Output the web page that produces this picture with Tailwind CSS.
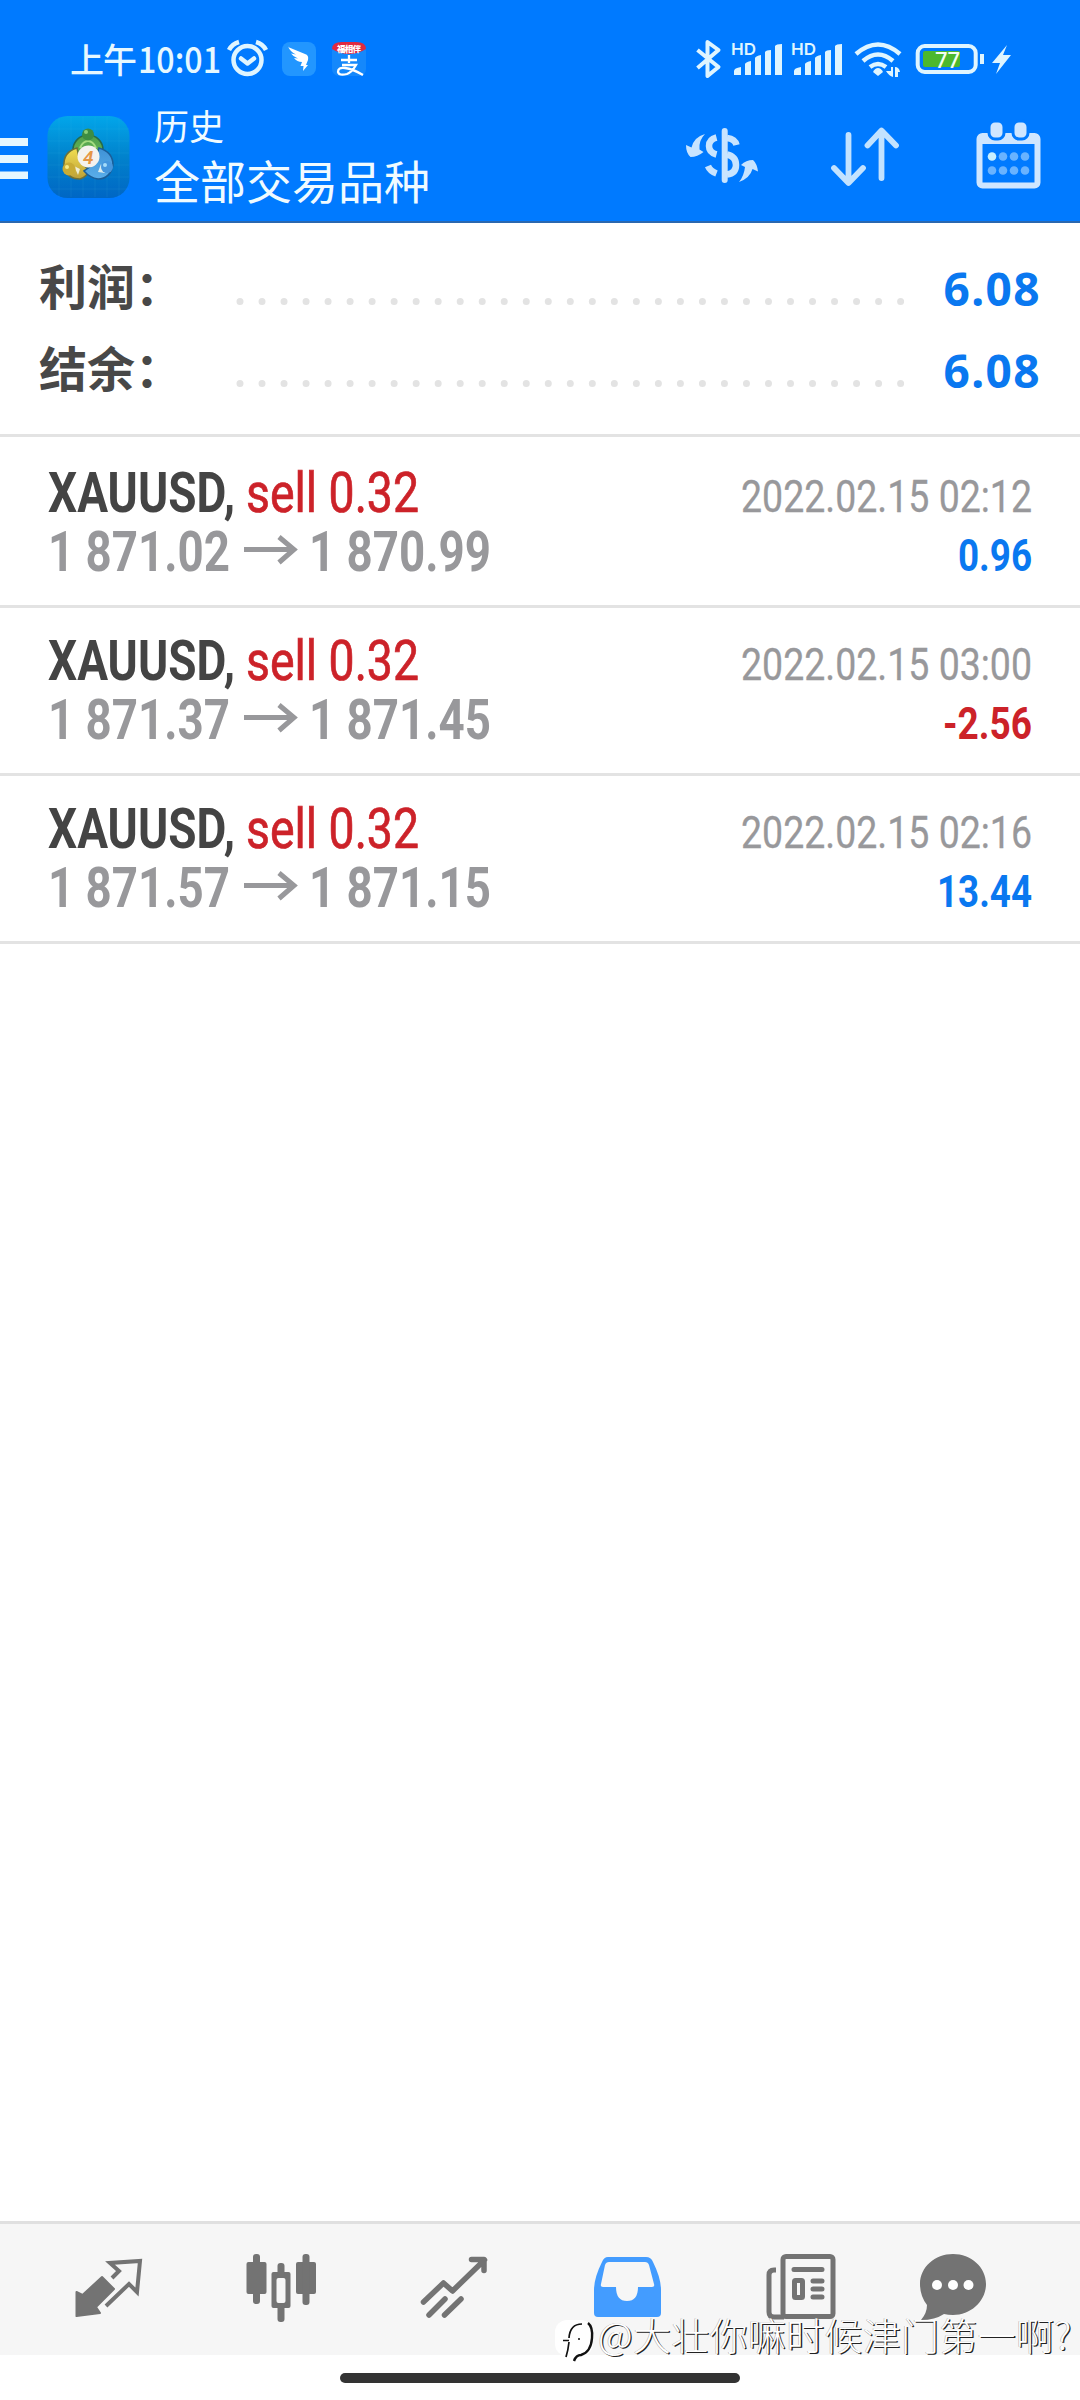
<!DOCTYPE html>
<html lang="zh-CN">
<head>
<meta charset="utf-8">
<title>历史</title>
<script src="https://cdn.jsdelivr.net/npm/@tailwindcss/browser@4"></script>
</head>
<body class="w-[1080px] h-[2400px] overflow-hidden bg-white font-['Roboto','Noto_Sans_CJK_SC',sans-serif] flex flex-col">

<header class="h-[223px] shrink-0 bg-[#007aff] border-b-2 border-[#2a68b0] flex flex-col text-[#f0fbff]">
  <!-- status bar -->
  <div class="h-[96px] shrink-0 flex justify-between">
    <svg class="w-[420px] h-[96px] block" viewBox="0 0 420 96" fill="none">
      <text x="70" y="72.500" font-size="34" font-weight="500" fill="#e6f8ff" textLength="67" font-family="Noto Sans CJK SC">上午</text>
      <text x="138" y="72.500" font-size="35" font-weight="500" fill="#e6f8ff" textLength="83" lengthAdjust="spacingAndGlyphs" font-family="Noto Sans CJK SC">10:01</text>
      <g stroke="#dff5ff" stroke-width="4.500" stroke-linecap="round" stroke-linejoin="round">
        <circle cx="247.500" cy="60" r="14"/><path d="M241 58.500l6.500 5 6.500-5"/><path stroke-linecap="butt" d="M229 50q3-6 10-8M266 50q-3-6-10-8"/>
      </g>
      <rect x="282" y="42" width="34" height="34" rx="8" fill="#2296ff"/>
      <path d="M288 47l17 7q4 1 3 6l-2 5h2l-5 6 .5-5h-3l1.500-4q-5 0-8-4l4 .5q-5-2-7-5l5 1q-6-3-8-8z" fill="#fff"/>
      <rect x="332" y="44" width="34" height="32" rx="7" fill="#1588fb"/>
      <path d="M332 49q0-7 10-7h14q10 0 10 7-8 5-17 5t-17-5z" fill="#e02a40"/>
      <text x="337" y="51.500" font-size="8.500" font-weight="900" fill="#fff" textLength="24" font-family="Noto Sans CJK SC">福相伴</text>
      <path d="M341 60h16M349 55v8M342 65h14q-4 7-9 9-8 2-9-2 0-5 7-4 8 1 18 7" stroke="#fff" stroke-width="2.300"/>
    </svg>
    <svg class="w-[400px] h-[96px] block" viewBox="680 0 400 96" fill="none">
      <path d="M697.500 50l21 17-11 9V42l11 8-21 18" stroke="#dff5ff" stroke-width="4" stroke-linejoin="round"/>
      <g fill="#dff5ff">
        <text x="731" y="54.500" font-size="16.500" font-weight="600" textLength="25" lengthAdjust="spacingAndGlyphs" font-family="Inter">HD</text>
        <text x="791" y="54.500" font-size="16.500" font-weight="600" textLength="25" lengthAdjust="spacingAndGlyphs" font-family="Inter">HD</text>
        <path d="M734 71q0-3 7-4v8h-7zM745 64q1-2 6-3v14h-6zM755 58q1-2 6-3v20h-6zM765 52q1-2 6-2v25h-6zM775 46q1-2 7-2v31h-7z"/>
        <path transform="translate(60)" d="M734 71q0-3 7-4v8h-7zM745 64q1-2 6-3v14h-6zM755 58q1-2 6-3v20h-6zM765 52q1-2 6-2v25h-6zM775 46q1-2 7-2v31h-7z"/>
        <path d="M873 72q2-4 5-4t5 4l-5 4z"/>
        <path d="M886 71h5v-4h2v10q-4-1-7-6zM895 67q4 0 5 5h-2v5h-3z"/>
        <path d="M980 54h4v10h-4zM1007 45l-15 18h8l-4 11 15-19h-8z"/>
      </g>
      <path d="M856 54q22-19 44 0M863 61q15-13 30 0M870 67q8-6 16 0" stroke="#dff5ff" stroke-width="4.500"/>
      <rect x="923" y="51" width="37" height="16" rx="2" fill="#4cb82e"/>
      <rect x="917.700" y="46" width="58" height="26" rx="7" stroke="#dff5ff" stroke-width="4"/>
      <text x="935" y="67.500" font-size="22" font-weight="500" fill="#f2fff2" textLength="25" font-family="Noto Sans">77</text>
    </svg>
  </div>
  <!-- toolbar -->
  <div class="h-[125px] flex">
    <svg class="w-[154px] h-[125px] block shrink-0" viewBox="0 96 154 125" fill="none">
      <defs><linearGradient id="bg" x1="0" y1="0" x2="0" y2="1"><stop stop-color="#02a6ea"/><stop offset=".5" stop-color="#0182cc"/><stop offset="1" stop-color="#0066c4"/></linearGradient>
      <linearGradient id="gr" x1="0" y1="0" x2="0" y2="1"><stop stop-color="#4f9e4c"/><stop offset="1" stop-color="#6cbb58"/></linearGradient>
      <linearGradient id="ye" x1="0" y1="0" x2="0" y2="1"><stop stop-color="#f2df50"/><stop offset="1" stop-color="#bda038"/></linearGradient>
      <linearGradient id="bl" x1="0" y1="0" x2="0" y2="1"><stop stop-color="#3f92d6"/><stop offset="1" stop-color="#5aaeea"/></linearGradient></defs>
      <path d="M0 138h28v8H0zM0 155h28v8H0zM0 171.500h28v7.500H0z" fill="#e6f7ff"/>
      <rect x="47.500" y="116" width="82" height="82" rx="20" fill="url(#bg)"/>
      <path d="M59 117v80M71 117v80M83 117v80M95 117v80M107 117v80M119 117v80M48 129h81M48 141h81M48 153h81M48 165h81M48 177h81M48 189h81" stroke="#5cc4f0" stroke-opacity=".1"/>
      <path d="M88 135a15 15 0 0 1 15 15q0 6-3 10H76q-3-4-3-10a15 15 0 0 1 15-15z" fill="url(#gr)" stroke="#276a49" stroke-width="1.500"/>
      <path d="M80 148q3-7 8-7t8 7" stroke="#a5dc80" stroke-width="2"/>
      <path d="M77 148q-14 4-13 18 3 13 16 13 7-2 9-9l-9-8z" fill="url(#ye)" stroke="#6d7039" stroke-width="1.500"/>
      <path d="M99 148q14 4 14 17-3 14-15 14-8-1-14-8l10-7z" fill="url(#bl)" stroke="#1b5e98" stroke-width="1.500"/>
      <path d="M74 166l6 3-2 6zM101 164l-3 8 7 1z" fill="#f5f8ee" opacity=".85"/>
      <circle cx="88" cy="134.500" r="6" fill="#3d8d43"/><circle cx="86" cy="132" r="2" fill="#8cce79"/>
      <circle cx="69" cy="169" r="6.500" fill="#c9ac35"/><circle cx="67" cy="167" r="2" fill="#f5eb87"/>
      <circle cx="107" cy="167" r="6" fill="#4596dd"/><circle cx="105" cy="165" r="2" fill="#a5dcfa"/>
      <circle cx="88.500" cy="156.500" r="11" fill="#f4f2ee"/>
      <text x="83" y="163.500" font-size="19" font-weight="600" fill="#e59645" font-style="italic" font-family="Roboto">4</text>
    </svg>
    <div class="flex-1 flex flex-col font-['Noto_Sans_CJK_SC',sans-serif]">
      <div class="mt-[8px] text-[35px] leading-[42px]">历史</div>
      <div class="mt-[5px] text-[46px] leading-[56px]">全部交易品种</div>
    </div>
    <svg class="w-[400px] h-[125px] block shrink-0" viewBox="680 96 400 125" fill="none">
      <path d="M724.700 131v49" stroke="#c8e4ff" stroke-width="6" stroke-linecap="round"/>
      <path d="M716.500 137.500q-7.500 2-7.500 8.500t7.500 8.500M727 138q8 1 9.500 7M727 154.500q9 2 9 10.500t-9 9.500" stroke="#c8e4ff" stroke-width="6.500"/>
      <path d="M708 166q2 5 8.500 7.500" stroke="#c8e4ff" stroke-width="6.500"/>
      <path d="M705 134q-11 3-13.500 13.500L686 145q0 8 4.500 12 7 0 13-5l-4-2.500q-1-9 5.500-15.500zM739 182q11-4 13.500-13l5.500 2.500q-1-8-5-11.500-7 0-12 5l4 2q-1 9-6 15z" fill="#c8e4ff"/>
      <path d="M848.500 135v47M834 168l14.500 15 14.500-15M881.500 178v-47M867.500 145.500l14-15 14.500 15" stroke="#c2e2ff" stroke-width="5.800" stroke-linecap="round" stroke-linejoin="round"/>
      <rect x="979.500" y="136" width="58" height="49.500" rx="3" stroke="#cfe6ff" stroke-width="6"/>
      <path d="M979 134h59v10h-59z" fill="#cfe6ff"/>
      <rect x="989" y="121" width="15" height="18" rx="6" fill="#cfe6ff" stroke="#007aff" stroke-width="3"/><rect x="1013" y="121" width="15" height="18" rx="6" fill="#cfe6ff" stroke="#007aff" stroke-width="3"/>
      <g fill="#69b3ff"><circle cx="992" cy="156.500" r="4.300" fill="#c8f0ff"/><circle cx="1003" cy="156.500" r="4.300"/><circle cx="1014" cy="156.500" r="4.300"/><circle cx="1025" cy="156.500" r="4.300"/><circle cx="992" cy="170.500" r="4.300"/><circle cx="1003" cy="170.500" r="4.300"/><circle cx="1014" cy="170.500" r="4.300"/><circle cx="1025" cy="170.500" r="4.300"/></g>
    </svg>
  </div>
</header>

<section class="h-[214px] shrink-0 border-b-[3px] border-[#e3e3e3] pt-[24px]">
  <div class="h-[82px] pl-[39px] pr-[39px] flex items-center">
    <div class="w-[197px] -mt-[7px] text-[48px] leading-[75px] font-bold text-[#484848] font-['Noto_Sans_CJK_SC',sans-serif] whitespace-nowrap">利润：</div>
    <svg class="w-[680px] h-[82px] block" viewBox="236 0 680 82"><path d="M240 54.500H901" stroke="#e3e3e3" stroke-width="7" stroke-linecap="round" stroke-dasharray="0 22.020"/></svg>
    <div class="ml-auto text-[46px] leading-[82px] tracking-[1.400px] font-bold text-[#0a78f0] font-['Noto_Sans',sans-serif]">6.08</div>
  </div>
  <div class="h-[82px] pl-[39px] pr-[39px] flex items-center">
    <div class="w-[197px] -mt-[7px] text-[48px] leading-[75px] font-bold text-[#484848] font-['Noto_Sans_CJK_SC',sans-serif] whitespace-nowrap">结余：</div>
    <svg class="w-[680px] h-[82px] block" viewBox="236 0 680 82"><path d="M240 54.500H901" stroke="#e3e3e3" stroke-width="7" stroke-linecap="round" stroke-dasharray="0 22.020"/></svg>
    <div class="ml-auto text-[46px] leading-[82px] tracking-[1.400px] font-bold text-[#0a78f0] font-['Noto_Sans',sans-serif]">6.08</div>
  </div>
</section>

<main class="flex-1">
  <div class="h-[171px] border-b-[3px] border-[#e3e3e3]">
    <svg class="w-[1080px] h-[168px] block" viewBox="0 437 1080 168" font-family="Roboto">
      <text x="48" y="512" font-size="55" font-weight="700" fill="#444" textLength="187" lengthAdjust="spacingAndGlyphs">XAUUSD,</text>
      <text x="246" y="512" font-size="55" fill="#cc2229" stroke="#cc2229" stroke-width=".7" textLength="173" lengthAdjust="spacingAndGlyphs">sell 0.32</text>
      <text x="48" y="571" font-size="55" font-weight="700" fill="#98989b" textLength="182" lengthAdjust="spacingAndGlyphs">1 871.02</text>
      <path d="M244 549.500h50M279 537l15 12.500-15 13" fill="none" stroke="#98989b" stroke-width="5"/>
      <text x="309" y="571" font-size="55" font-weight="700" fill="#98989b" textLength="182" lengthAdjust="spacingAndGlyphs">1 870.99</text>
      <text x="741" y="511.500" font-size="45" fill="#98989b" stroke="#98989b" stroke-width=".3" textLength="291" lengthAdjust="spacingAndGlyphs">2022.02.15 02:12</text>
      <text x="958" y="571" font-size="45" font-weight="700" fill="#0a78f0" textLength="74" lengthAdjust="spacingAndGlyphs">0.96</text>
    </svg>
  </div>
  <div class="h-[168px] border-b-[3px] border-[#e3e3e3]">
    <svg class="w-[1080px] h-[165px] block" viewBox="0 440 1080 165" font-family="Roboto">
      <text x="48" y="512" font-size="55" font-weight="700" fill="#444" textLength="187" lengthAdjust="spacingAndGlyphs">XAUUSD,</text>
      <text x="246" y="512" font-size="55" fill="#cc2229" stroke="#cc2229" stroke-width=".7" textLength="173" lengthAdjust="spacingAndGlyphs">sell 0.32</text>
      <text x="48" y="571" font-size="55" font-weight="700" fill="#98989b" textLength="182" lengthAdjust="spacingAndGlyphs">1 871.37</text>
      <path d="M244 549.500h50M279 537l15 12.500-15 13" fill="none" stroke="#98989b" stroke-width="5"/>
      <text x="309" y="571" font-size="55" font-weight="700" fill="#98989b" textLength="182" lengthAdjust="spacingAndGlyphs">1 871.45</text>
      <text x="741" y="511.500" font-size="45" fill="#98989b" stroke="#98989b" stroke-width=".3" textLength="291" lengthAdjust="spacingAndGlyphs">2022.02.15 03:00</text>
      <text x="943" y="571" font-size="45" font-weight="700" fill="#cc2229" textLength="89" lengthAdjust="spacingAndGlyphs">-2.56</text>
    </svg>
  </div>
  <div class="h-[168px] border-b-[3px] border-[#e3e3e3]">
    <svg class="w-[1080px] h-[165px] block" viewBox="0 440 1080 165" font-family="Roboto">
      <text x="48" y="512" font-size="55" font-weight="700" fill="#444" textLength="187" lengthAdjust="spacingAndGlyphs">XAUUSD,</text>
      <text x="246" y="512" font-size="55" fill="#cc2229" stroke="#cc2229" stroke-width=".7" textLength="173" lengthAdjust="spacingAndGlyphs">sell 0.32</text>
      <text x="48" y="571" font-size="55" font-weight="700" fill="#98989b" textLength="182" lengthAdjust="spacingAndGlyphs">1 871.57</text>
      <path d="M244 549.500h50M279 537l15 12.500-15 13" fill="none" stroke="#98989b" stroke-width="5"/>
      <text x="309" y="571" font-size="55" font-weight="700" fill="#98989b" textLength="182" lengthAdjust="spacingAndGlyphs">1 871.15</text>
      <text x="741" y="511.500" font-size="45" fill="#98989b" stroke="#98989b" stroke-width=".3" textLength="291" lengthAdjust="spacingAndGlyphs">2022.02.15 02:16</text>
      <text x="937" y="571" font-size="45" font-weight="700" fill="#0a78f0" textLength="95" lengthAdjust="spacingAndGlyphs">13.44</text>
    </svg>
  </div>
</main>

<footer class="h-[179px] shrink-0 relative">
  <nav class="h-[134px] bg-[#f6f6f6] border-t-[3px] border-[#e0e0e0]">
    <svg class="w-[1080px] h-[131px] block" viewBox="0 2224 1080 131" fill="none">
      <path d="M102 2277l12 12-18 18 4 6-23.500 3v-24l6 3z" fill="#737373" stroke="#737373" stroke-width="2" stroke-linejoin="round"/>
      <path d="M112 2278l7-7-9-8 30-2-3 31-8-8-23 22" stroke="#737373" stroke-width="4"/>
      <g fill="#737373"><rect x="246.500" y="2262" width="20" height="32" rx="2"/><rect x="253" y="2254" width="7" height="50" rx="3"/><rect x="296" y="2262" width="20" height="32" rx="2"/><rect x="302.500" y="2254" width="7" height="51" rx="3"/><rect x="271.500" y="2272" width="19" height="36" rx="2"/><rect x="277.500" y="2263" width="7" height="59" rx="3"/></g>
      <rect x="276.500" y="2278" width="9" height="25" rx="2" fill="#f6f6f6"/>
      <path d="M423.500 2302l20-19 9 8 32-31M471.500 2259.500h12.500v11M429 2315l16-16M444.500 2315l16.500-16" stroke="#737373" stroke-width="5.500" stroke-linecap="round" stroke-linejoin="round"/>
      <path fill="#439cff" fill-rule="evenodd" d="M608 2257h38q5 0 7 5 8 16 8 28v23q0 4-4 4h-59q-4 0-4-4v-23q0-12 8-28 2-5 6-5zm1 5q-3 0-4 3l-4 19q-1 3 2 3h13q0 14 11 14t11-14h14q3 0 2-3l-5-19q-1-3-4-3z"/>
      <g stroke="#737373" stroke-width="5"><rect x="783" y="2256.500" width="50" height="60" rx="3"/><path d="M776 2270h-2q-5 0-5 5v37q0 5 5 5h10"/><path d="M794 2269.500h28M813 2281h9M813 2289h9M813 2297h9" stroke-linecap="round"/><rect x="794.500" y="2280.500" width="8" height="17" rx="1"/></g>
      <path fill="#737373" d="M953 2254c18 0 33 13 33 30s-15 31-33 31q-5 0-9-1-9 6-23 6 6-7 6-15-7-9-7-21c0-17 15-30 33-30z"/>
      <g fill="#fff"><circle cx="937" cy="2285" r="5"/><circle cx="953" cy="2285" r="5"/><circle cx="968.500" cy="2285" r="5"/></g>
    </svg>
  </nav>
  <div class="mx-auto mt-[18px] w-[400px] h-[10px] rounded-full bg-[#333]"></div>
  <!-- watermark -->
  <div class="absolute left-[552px] top-[92px] flex">
    <svg class="w-[46px] h-[56px] block" viewBox="552 2313 46 56">
      <rect x="555" y="2320" width="38" height="36" rx="12" fill="#fff"/>
      <path d="M563 2340.500h6M569 2338q1-14 13-14M569 2342q-1 9-3 15M578 2339h2" fill="none" stroke="#111" stroke-width="1.700"/>
      <path d="M588 2323q5 4 4 15-1 14-11 17-5 0-7 6" fill="none" stroke="#111" stroke-width="2.400"/>
    </svg>
    <span class="-mt-[3px] text-[38px] leading-[48px] tracking-[0.300px] font-light text-white whitespace-nowrap font-['Noto_Sans_CJK_SC',sans-serif] [text-shadow:1.300px_1.300px_0_#222,-0.500px_-0.500px_0_#aaa]">@大壮你嘛时候津门第一啊?</span>
  </div>
</footer>
</body>
</html>
